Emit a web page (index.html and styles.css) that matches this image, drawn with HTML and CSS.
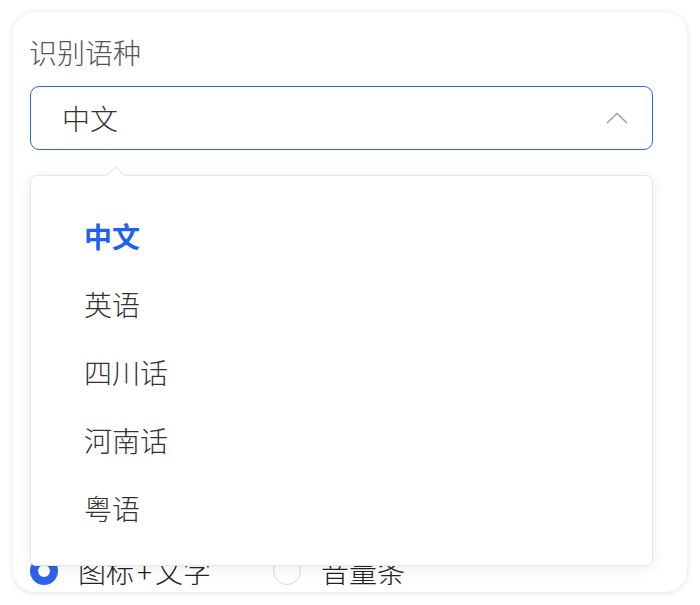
FILE: index.html
```html
<!DOCTYPE html>
<html lang="zh-CN">
<head>
    <meta charset="UTF-8">
    <meta name="viewport" content="width=device-width, initial-scale=1.0">
    <title>识别语种</title>
    <link rel="stylesheet" href="styles.css">
</head>
<body>
    <div class="card">
        <div class="field-label">识别语种</div>
        <div class="select is-open">
            <span class="select-value">中文</span>
            <svg class="select-arrow" width="22" height="12" viewBox="0 0 22 12">
                <polyline points="1,11 11,1.5 21,11" fill="none" stroke="#a0a0a0" stroke-width="1.6"/>
            </svg>
        </div>

        <div class="radio-row">
            <label class="radio checked"><span class="radio-dot"></span><span>图标<span class="plus">+</span>文字</span></label>
            <label class="radio"><span class="radio-dot"></span><span>音量条</span></label>
        </div>

        <!-- dropdown popup over the form -->
        <div class="dropdown">
            <ul class="option-list">
                <li class="option active">中文</li>
                <li class="option">英语</li>
                <li class="option">四川话</li>
                <li class="option">河南话</li>
                <li class="option">粤语</li>
            </ul>
        </div>
    </div>
</body>
</html>
```

FILE: styles.css
```css
body {
    margin: 0;
    padding: 12px 13px;
    background-color: #ffffff;
    font-family: "Noto Sans CJK SC", "Noto Sans", sans-serif;
    font-weight: 300;
}

.card {
    position: relative;
    box-sizing: border-box;
    width: 674px;
    height: 580px;
    padding: 20px 17px 0;
    background-color: #fff;
    border-radius: 22px;
    box-shadow: 0 1px 6px rgba(0, 0, 0, 0.12);
    overflow: hidden;
}

.field-label {
    margin-left: -1px;
    font-size: 28px;
    line-height: 40px;
    color: #555;
}

.select {
    box-sizing: border-box;
    width: 623px;
    height: 64px;
    margin-top: 14px;
    padding: 0 24px 0 31px;
    display: flex;
    align-items: center;
    justify-content: space-between;
    border: 1.5px solid #2f66e6;
    border-radius: 9px;
}

.select-value {
    font-size: 28px;
    color: #333;
}

.select-arrow {
    display: block;
}

.radio-row {
    display: flex;
    align-items: center;
    margin-top: 407px;
    height: 28px;
}

.radio {
    display: flex;
    align-items: center;
    gap: 20px;
    margin-right: 62px;
    font-size: 28px;
    line-height: 28px;
    color: #222;
}

.plus {
    margin: 0 3px;
}

.radio-dot {
    box-sizing: border-box;
    width: 28px;
    height: 28px;
    border-radius: 50%;
    border: 1px solid #d8d8d8;
    background: #fff;
}

.radio.checked .radio-dot {
    border: 8px solid #2c63eb;
    background: #fff;
}

.dropdown {
    position: absolute;
    top: 163px;
    left: 17px;
    box-sizing: border-box;
    width: 623px;
    height: 391px;
    background: #fff;
    border: 1px solid #e6e6e6;
    border-radius: 6px;
    box-shadow: 0 2px 14px rgba(0, 0, 0, 0.08);
}

.dropdown::before {
    content: "";
    position: absolute;
    top: -7px;
    left: 78px;
    width: 12px;
    height: 12px;
    background: #fff;
    border-top: 1px solid #e6e6e6;
    border-left: 1px solid #e6e6e6;
    transform: rotate(45deg);
}

.option-list {
    list-style: none;
    margin: 0;
    padding: 26px 0 0;
}

.option {
    height: 68px;
    line-height: 68px;
    padding-left: 53px;
    font-size: 28px;
    color: #333;
}

.option.active {
    color: #1f5ff2;
    font-weight: bold;
}
```
